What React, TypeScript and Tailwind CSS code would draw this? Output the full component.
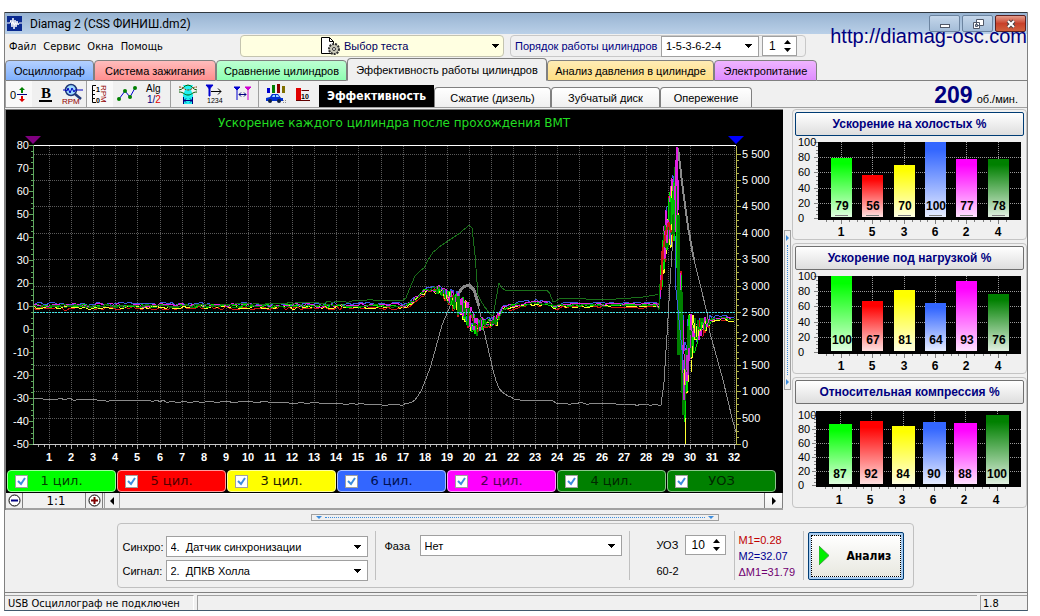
import React, { useState } from 'react';
import clsx from 'clsx';

type Point = [number, number];

const TABS = [
  { label: 'Осциллограф', className: 'w-[89px] bg-linear-to-b from-[#b4d0ff] to-[#7fb0fc]' },
  { label: 'Система зажигания', className: 'w-[122px] bg-linear-to-b from-[#ffbcbc] to-[#ff8e8e]' },
  { label: 'Сравнение цилиндров', className: 'w-[131px] bg-linear-to-b from-[#bcffd2] to-[#8effb2]' },
  { label: 'Эффективность работы цилиндров', className: 'w-[200px]', active: true },
  { label: 'Анализ давления в цилиндре', className: 'w-[167px] bg-linear-to-b from-[#ffecb4] to-[#ffdf82]' },
  { label: 'Электропитание', className: 'w-[103px] bg-linear-to-b from-[#efb4ff] to-[#df8cff]' },
];

const SUB_TABS = [
  { label: 'Сжатие (дизель)', className: 'w-[117px]' },
  { label: 'Зубчатый диск', className: 'w-[109px]' },
  { label: 'Опережение', className: 'w-[92px]' },
];

const LEGEND = [
  { label: '1 цил.', className: 'bg-[#00ff00] border-[#9dff9d] text-[#004000]' },
  { label: '5 цил.', className: 'bg-[#ff0000] border-[#ff9d9d] text-[#500000]' },
  { label: '3 цил.', className: 'bg-[#ffff00] border-[#ffff9d] text-[#202000]' },
  { label: '6 цил.', className: 'bg-[#3366ff] border-[#a8beff] text-[#001050]' },
  { label: '2 цил.', className: 'bg-[#ff00ff] border-[#ff9dff] text-[#500050]' },
  { label: '4 цил.', className: 'bg-[#008000] border-[#8cc68c] text-[#002800]' },
  { label: 'УОЗ', className: 'bg-[#008000] border-[#8cc68c] text-[#002800]' },
];

const CYLINDERS = [
  { id: 1, color: '#00ff00' },
  { id: 5, color: '#ff0000' },
  { id: 3, color: '#ffff00' },
  { id: 6, color: '#3366ff' },
  { id: 2, color: '#ff00ff' },
  { id: 4, color: '#008000' },
];

// average acceleration curve shared by all cylinders
const BASE: Point[] = [
  [34, 306], [408, 306], [414, 300], [424, 292], [432, 289], [440, 291], [448, 296], [456, 303],
  [464, 309], [470, 318], [477, 328], [482, 324], [490, 322], [497, 320], [500, 312], [506, 307],
  [518, 305], [535, 303], [550, 304], [554, 307], [562, 305], [659, 305], [662, 270], [665, 240],
  [668, 226], [672, 215], [675, 205], [677, 225], [679, 290], [682, 340], [684, 385], [686, 385],
  [688, 350], [690, 338], [696, 332], [704, 325], [712, 319], [722, 318], [735, 320],
];

const NOISE: Point[] = [
  [34, 2], [410, 2], [430, 3], [446, 6], [460, 12], [470, 12], [480, 8], [486, 4], [498, 5],
  [504, 2], [658, 1], [662, 22], [668, 26], [673, 42], [677, 50], [680, 60], [684, 46], [687, 34],
  [691, 26], [698, 14], [704, 8], [710, 4], [718, 2], [728, 1], [735, 0],
];

const TRACES = [
  { color: '#3c5ce0', offset: -2, seed: 11 },
  { color: '#d01818', offset: 2, seed: 23 },
  { color: '#ffff30', offset: 1, seed: 37 },
  { color: '#00e000', offset: 0, seed: 51 },
  { color: '#e020e0', offset: -1, seed: 67 },
  { color: '#008000', offset: 0, seed: 83 },
];

const ADVANCE: Point[] = [
  [34, 306], [120, 306], [250, 304], [330, 302], [370, 300], [405, 300], [409, 290], [416, 274],
  [424, 268], [432, 253], [440, 246], [453, 238], [460, 233], [470, 224], [472, 228], [475, 255],
  [478, 295], [483, 305], [490, 314], [495, 317], [497, 281], [499, 283], [503, 290], [549, 290],
  [552, 303], [560, 298], [610, 299], [640, 297], [659, 294],
];

const SPEED: Point[] = [
  [34, 399], [60, 399], [150, 401], [250, 402], [380, 404], [408, 404], [415, 400], [422, 390],
  [432, 362], [442, 325], [450, 306], [457, 295], [463, 287], [469, 284], [474, 290], [480, 312],
  [486, 340], [492, 366], [497, 385], [503, 393], [515, 399], [530, 401], [550, 400], [557, 403],
  [600, 403], [640, 405], [662, 405], [665, 370], [669, 300], [673, 235], [678, 147],
];

const interpolate = (points: Point[], x: number) => {
  const i = points.findIndex(p => p[0] >= x);
  if (i <= 0) return points[i < 0 ? points.length - 1 : 0][1];
  const [x0, y0] = points[i - 1];
  const [x1, y1] = points[i];
  return y0 + ((y1 - y0) * (x - x0)) / (x1 - x0);
};

const createRandom = (seed: number) => {
  let s = seed;
  return () => {
    s = (s * 16807) % 2147483647;
    return s / 2147483647 - 0.5;
  };
};

const buildTrace = (points: Point[], noise: (x: number) => number, offset: number, seed: number) => {
  const random = createRandom(seed * 7919);
  const out: string[] = [];
  const end = points[points.length - 1][0];
  let x = points[0][0];
  while (x <= end) {
    const level = noise(x);
    const y = interpolate(points, x) + offset + random() * 2 * level;
    out.push(`${x},${Math.max(147, Math.min(443, Math.round(y)))}`);
    // calm parts of the signal change slower
    x += level > 4 ? 1 : 3;
  }
  return out.join(' ');
};

const toPoints = (points: Point[]) => points.map(p => p.join(',')).join(' ');

const range = (n: number) => Array.from({ length: n }, (_, i) => i);

const MainChart: React.FC = () => {
  const gridX = range(32).map(i => Math.round(49 + i * 22.1));
  const gridY = range(12).map(i => Math.round(444 - i * 26.4));

  return (
    <svg viewBox="6 110 777 359" className="block w-full bg-black font-['Liberation_Sans']" role="img" aria-label="Ускорение каждого цилиндра">
      <text x="394" y="127" textAnchor="middle" fill="#22dd22" fontSize="12" className="font-['DejaVu_Sans']">
        Ускорение каждого цилиндра после прохождения ВМТ
      </text>
      <g shapeRendering="crispEdges" fill="none">
        <g stroke="#5a5a5a" strokeDasharray="1 1">
          {gridX.map(x => <path key={x} d={`M${x}.5 146V444`} />)}
          {gridY.slice(1).map(y => <path key={y} d={`M34 ${y}.5H736`} />)}
        </g>
        <path d="M34 145.5H736" stroke="#fff" />
        <path d="M33.5 145V445" stroke="#5fa85f" />
        <path d="M33 444.5H737" stroke="#c8c8c8" />
        <path d="M736.5 146V445" stroke="#b8b850" />
        {range(53).map(i => {
          const y = Math.round(145 + i * 5.75) + 0.5;
          return <path key={i} d={`M${i % 4 ? 31 : 29} ${y}H33`} stroke="#5fa85f" />;
        })}
        {range(45).map(i => {
          const y = Math.round(444 - i * 6.6) + 0.5;
          return <path key={i} d={`M737 ${y}H${i % 4 ? 739 : 741}`} stroke="#b8b850" />;
        })}
        {range(127).map(i => {
          const x = Math.round(38 + i * 5.525) + 0.5;
          return <path key={i} d={`M${x} 445V${i % 4 === 2 ? 449 : 447}`} stroke="#a8a8a8" />;
        })}
        <polyline points={buildTrace(SPEED, x => (x < 408 || (x > 515 && x < 660) ? 1 : 0), 0, 5)} stroke="#8a8a8a" />
        <polyline points={toPoints([[456, 297], [463, 287], [469, 285], [474, 290], [479, 306]])} stroke="#8a8a8a" strokeWidth="3" />
        <polyline points={toPoints([[678, 148], [683, 190], [688, 227], [694, 260]])} stroke="#8a8a8a" strokeWidth="2" />
        <polyline points={toPoints([[694, 260], [701, 288], [707, 313], [710, 333], [723, 380], [733, 422], [736, 432]])} stroke="#8a8a8a" />
        {TRACES.map(t => (
          <polyline key={t.seed} points={buildTrace(BASE, x => interpolate(NOISE, x), t.offset, t.seed)} stroke={t.color} />
        ))}
        <polyline points={toPoints([[661, 290], [663, 250], [666, 232], [669, 222], [671, 232]])} stroke="#d01818" strokeWidth="2" />
        <polyline points={toPoints([[671, 225], [672, 198], [673, 215], [674, 182], [675, 230]])} stroke="#00c000" />
        <polyline points={toPoints([[675, 200], [677, 147], [678, 210]])} stroke="#e020e0" strokeWidth="2" />
        <polyline points={toPoints([[678, 215], [678, 355], [681, 290], [682, 370], [684, 415]])} stroke="#008000" strokeWidth="3" />
        <polyline points={toPoints([[682, 345], [684, 400], [687, 355], [688, 375], [691, 335]])} stroke="#b830c8" />
        <polyline points={toPoints([[675, 235], [676, 290], [679, 320], [684, 370]])} stroke="#3c5ce0" />
        <path d="M685.5 418V444M691.5 360V372" stroke="#ffff30" />
        <polyline points={buildTrace(ADVANCE, x => (x < 400 ? 1 : 0), 0, 3)} stroke="#1a701a" />
        <path d="M34 312.5H736" stroke="#40e8e8" strokeDasharray="2 1" />
      </g>
      <path d="M25 136H41L33 144Z" fill="#800080" />
      <path d="M728 136H744L736 144Z" fill="#0000ff" />
      <g fill="#fff" fontSize="11">
        {range(14).map(i => (
          <text key={i} x="29" y={Math.round(149 + i * 23)} textAnchor="end">{80 - i * 10}</text>
        ))}
        {gridY.map((y, i) => (
          <text key={y} x="742" y={y + 4}>{i > 1 ? `${Math.floor(i / 2)} ${i % 2 ? '500' : '000'}` : i * 500}</text>
        ))}
      </g>
      <g fill="#fff" fontSize="11" fontWeight="bold" textAnchor="middle">
        {gridX.map((x, i) => <text key={x} x={x} y="461">{i + 1}</text>)}
      </g>
    </svg>
  );
};

type BarChartProps = {
  title: string;
  values: number[];
  compression?: boolean;
  focused?: boolean;
  baseline?: boolean;
};

const BarChart: React.FC<BarChartProps> = ({ title, values, compression, focused, baseline }) => {
  const left = compression ? 21 : 23;
  const top = compression ? 7 : 6;
  const zero = compression ? 81 : 82;
  const full = compression ? 11 : 6;
  const barWidth = compression ? 23 : 21;
  const firstBar = compression ? 34 : 36;
  const scale = (v: number) => Math.round(zero - ((zero - full) * v) / 100);

  return (
    <section className="rounded border border-[#c4c4c4] px-[2px] pt-[2px]">
      <button
        className={clsx(
          'block h-6 w-full rounded-xs border bg-linear-to-b from-white to-[#dedede] text-[12px] font-bold text-[#000080]',
          focused ? 'border-[#003c74]' : 'border-[#707070]',
        )}
      >
        {title}
      </button>
      <svg viewBox="0 0 229 103" className="block w-full" role="img" aria-label={title}>
        <defs>
          {CYLINDERS.map(c => (
            <linearGradient key={c.id} id={`bar${c.id}`} x1="0" y1="0" x2="0" y2="1">
              <stop offset="0.1" stopColor={c.color} />
              <stop offset="1" stopColor={c.color} stopOpacity="0.12" />
            </linearGradient>
          ))}
        </defs>
        <g shapeRendering="crispEdges">
          <path d={`M${left} ${top}H226V${zero + 2}H${left}Z`} fill="#000" />
          {[20, 40, 60, 80].map(v => (
            <path key={v} d={`M${left} ${scale(v)}.5H226`} stroke="#9a9a9a" strokeDasharray="1 1" />
          ))}
          {range(21).map(i => {
            const y = scale(i * 5) + 0.5;
            return <path key={i} d={`M${left - (i % 4 ? 2 : 4)} ${y}H${left}`} stroke="#808080" />;
          })}
          {values.map((v, i) => {
            const x = Math.round(firstBar + i * 31.3);
            const mid = x + Math.floor(barWidth / 2);
            return (
              <g key={i}>
                <path d={`M${mid}.5 ${top}V${zero}`} stroke="#9a9a9a" strokeDasharray="1 1" />
                <rect x={x} y={scale(v)} width={barWidth} height={zero - 1 - scale(v)} fill="#fff" />
                <rect x={x} y={scale(v)} width={barWidth} height={zero - 1 - scale(v)} fill={`url(#bar${CYLINDERS[i].id})`} />
                {baseline && <path d={`M${x + 4} 79.5H${x + 17}`} stroke="#808080" />}
                <path d={`M${mid}.5 ${zero + 2}V${zero + 6}M${mid - 8}.5 ${zero + 2}v2M${mid + 8}.5 ${zero + 2}v2M${mid - 15}.5 ${zero + 2}v2`} stroke="#808080" />
              </g>
            );
          })}
        </g>
        <g fill="#000" fontSize="11">
          {range(6).map(i => <text key={i} x="3" y={scale(i * 20) + 4}>{i * 20}</text>)}
        </g>
        <g fill="#000" fontSize="12" textAnchor="middle" fontWeight="bold">
          {values.map((v, i) => (
            <text key={i} x={Math.round(firstBar + i * 31.3) + 11} y="74">{v}</text>
          ))}
          {CYLINDERS.map((c, i) => (
            <text key={c.id} x={Math.round(firstBar + i * 31.3) + 10} y="100">{c.id}</text>
          ))}
        </g>
      </svg>
    </section>
  );
};

const Caret: React.FC = () => (
  <svg viewBox="0 0 7 4" className="pointer-events-none w-[7px] shrink-0" shapeRendering="crispEdges"><path d="M0 0H7L3.500 4Z" /></svg>
);

const Select: React.FC<{ id: string; label?: string; options: string[]; className?: string }> = ({ id, label, options, className }) => (
  <div className={clsx('flex h-[21px] items-center border border-[#a0a0a0] bg-white pr-[6px]', className)}>
    <select id={id} aria-label={label} className="h-full min-w-0 flex-1 appearance-none pl-1 text-[11px] outline-none">
      {options.map(o => <option key={o}>{o}</option>)}
    </select>
    <Caret />
  </div>
);

const Spinner: React.FC<{ id: string; label?: string; initial: number; className?: string }> = ({ id, label, initial, className }) => {
  const [value, setValue] = useState(initial);
  return (
    <div className={clsx('flex h-5 items-center border border-[#a0a0a0] bg-white', className)}>
      <input
        id={id}
        aria-label={label}
        value={value}
        onChange={e => setValue(Number(e.target.value) || 0)}
        className="min-w-0 flex-1 pl-[6px] text-[12px] outline-none"
      />
      <div className="flex w-4 flex-col gap-1 pl-1">
        <button aria-label="Больше" onClick={() => setValue(value + 1)}>
          <svg viewBox="0 0 7 4" className="block w-[7px]"><path d="M0 4H7L3.500 0Z" /></svg>
        </button>
        <button aria-label="Меньше" onClick={() => setValue(value - 1)}>
          <svg viewBox="0 0 7 4" className="block w-[7px]"><path d="M0 0H7L3.500 4Z" /></svg>
        </button>
      </div>
    </div>
  );
};

const Icon: React.FC<{ children: React.ReactNode }> = ({ children }) => (
  <svg viewBox="0 0 24 22" className="h-[22px] w-6" fill="none" fontWeight="bold">{children}</svg>
);

const TOOLS = [
  {
    name: 'Ноль',
    pressed: true,
    icon: (
      <Icon>
        <text x="3" y="16" fill="#000" fontSize="11" fontWeight="normal">0</text>
        <path d="M10 11.500H20" stroke="#000080" />
        <path d="M15 4L18 7H16V10H14V7H12Z" fill="#008000" />
        <path d="M15 19L18 16H16V13H14V16H12Z" fill="#e00000" />
      </Icon>
    ),
  },
  {
    name: 'Жирные линии',
    icon: (
      <Icon>
        <text x="12" y="15" fill="#000" fontSize="15" textAnchor="middle" className="font-['Liberation_Serif']">B</text>
        <path d="M5 18H18" stroke="#000" strokeWidth="2" />
      </Icon>
    ),
  },
  {
    name: 'Обороты',
    icon: (
      <Icon>
        <circle cx="10" cy="7" r="5.500" fill="#9cd8ff" stroke="#203878" strokeWidth="1.500" />
        <path d="M2 7H4L6 8L7 5L9 10L11 5L13 9L14 7H22" stroke="#0000c0" />
        <path d="M14 11L20 16" stroke="#203878" strokeWidth="2.500" />
        <text x="1" y="21" fill="#900000" fontSize="8" fontWeight="normal">RPM</text>
      </Icon>
    ),
  },
  {
    name: 'Шкала оборотов',
    pressed: true,
    icon: (
      <Icon>
        <path d="M8 2.500H4.500V19.500H8M4.500 7.500H7M4.500 11.500H7M4.500 15.500H7" stroke="#000" />
        <text x="8" y="9" fill="#000" fontSize="7">1</text>
        <text x="8" y="20" fill="#000" fontSize="7">0</text>
        <text transform="translate(13 2) rotate(90)" fill="#900000" fontSize="8" fontWeight="normal">RPM</text>
      </Icon>
    ),
  },
  {
    name: 'Точки',
    icon: (
      <Icon>
        <path d="M4 16L10 8L15 14L20 5" stroke="#0000d0" />
        <g fill="#008000"><circle cx="4" cy="16" r="2" /><circle cx="10" cy="8" r="2" /><circle cx="15" cy="14" r="2" /><circle cx="20" cy="5" r="2" /></g>
      </Icon>
    ),
  },
  {
    name: 'Алгоритм',
    icon: (
      <Icon>
        <text x="4" y="9" fill="#000" fontSize="10" fontWeight="normal">Alg</text>
        <text x="5" y="20" fill="#000080" fontSize="10" fontWeight="normal">1/<tspan fill="#e00000">2</tspan></text>
      </Icon>
    ),
    separator: true,
  },
  {
    name: 'Интервал',
    icon: (
      <Icon>
        <path d="M7 2H17L15 7L17 12V21H7V12L9 7Z" fill="#20f0f0" />
        <path d="M3 7C7 7 8 2 12 2S17 7 21 7M3 9C8 9 8 12 12 12S16 9 21 9" stroke="#006000" />
        <path d="M3 4C8 4 8 7 12 7S16 4 21 4" stroke="#804000" strokeDasharray="2 1" />
        <path d="M7.500 14V21M16.500 14V21M8 17.500H16M10 15.500L8 17.500L10 19.500M14 15.500L16 17.500L14 19.500" stroke="#000080" />
      </Icon>
    ),
  },
  {
    name: 'Порядок меток',
    icon: (
      <Icon>
        <path d="M3 2H10L6.500 6ZM6 5H7V13H6Z" fill="#0000d0" stroke="#0000d0" />
        <path d="M8 8.500H18M15 5.500L18 8.500L15 11.500" stroke="#000" />
        <text x="4" y="20" fill="#000" fontSize="7" fontWeight="normal">1234</text>
      </Icon>
    ),
  },
  {
    name: 'Между метками',
    icon: (
      <Icon>
        <path d="M4 4H10L7 7ZM7 7V17" fill="#0000d0" stroke="#0000d0" />
        <path d="M15 4H21L18 7ZM18 7V17" fill="#d000d0" stroke="#d000d0" />
        <path d="M9 11.500H16M11 9.500L9 11.500L11 13.500M14 9.500L16 11.500L14 13.500" stroke="#000080" />
      </Icon>
    ),
    separator: true,
  },
  {
    name: 'Диаграмма автомобиля',
    icon: (
      <Icon>
        <path d="M3 5h3v5h-3z" fill="#0000d0" /><path d="M8 2h3v8h-3z" fill="#008000" />
        <path d="M13 1h3v9h-3z" fill="#900000" /><path d="M18 3h3v7h-3z" fill="#807000" />
        <path d="M2 15L6 14L8 11H14L17 15H19V18H2Z" fill="#0030d0" />
        <path d="M9 12H11V14H8ZM12 12H14L15 14H12Z" fill="#9cd8ff" />
        <circle cx="6" cy="18" r="2" fill="#102040" /><circle cx="15" cy="18" r="2" fill="#102040" />
        <path d="M19 17.500H22M19 19.500H23" stroke="#909090" strokeDasharray="1 1" />
      </Icon>
    ),
  },
  {
    name: 'Столбцы',
    icon: (
      <Icon>
        <path d="M5 5h5v12h-5z" fill="#e00000" />
        <path d="M5 17.500H19M10.500 7.500H18" stroke="#600000" />
        <text x="10" y="16" fill="#000" fontSize="7">10</text>
      </Icon>
    ),
  },
];

const WindowButton: React.FC<{ label: string; close?: boolean; children: React.ReactNode }> = ({ label, close, children }) => (
  <button
    aria-label={label}
    className={clsx(
      'flex h-[17px] w-[31px] items-center justify-center rounded-xs border bg-linear-to-b',
      close ? 'border-[#5a2020] from-[#e49c8c] via-[#c8402a] to-[#d0603c]' : 'border-[#6c84a0] from-[#c4d6ea] to-[#a4bdd8]',
    )}
  >
    <svg viewBox="0 0 14 12" className="h-3 w-[14px]" fill="none">{children}</svg>
  </button>
);

const Divider: React.FC = () => <div className="h-[49px] w-px shrink-0 bg-[#c0c0c0]" />;

const Zoom: React.FC<{ label: string; plus?: boolean }> = ({ label, plus }) => (
  <button aria-label={label} className="flex w-[17px] items-center justify-center border-r border-[#808080]">
    <svg viewBox="0 0 13 13" className="w-[13px]" fill="none">
      <circle cx="6.500" cy="6.500" r="5.500" fill="#fff" stroke="#000" />
      <path d={plus ? 'M3 6.500H10M6.500 3V10' : 'M3 6.500H10'} stroke={plus ? '#800000' : '#000080'} strokeWidth="2" />
    </svg>
  </button>
);

const App: React.FC = () => {
  const [visible, setVisible] = useState(LEGEND.map(() => true));

  const toggle = (index: number) => {
    setVisible(visible.map((v, i) => (i === index ? !v : v)));
  };

  return (
    <div className="bg-white pt-3 pr-3 pl-1 font-['Liberation_Sans',sans-serif] text-[11px] leading-4 text-black">
      <div className="relative border-x border-b border-x-[#808080] border-b-[#40586c] bg-[#f0f0f0]">
        <header className="flex h-[22px] items-center gap-2 border-t border-[#303840] bg-linear-to-b from-[#98b4d2] to-[#bad0e8] pr-px pl-[2px]">
          <svg viewBox="0 0 15 15" className="w-[15px]">
            <rect width="15" height="15" fill="#0a2a90" />
            <path d="M0 7H3L4 4L5 11L6 2L7 13L8 4L9 11L10 5L11 9L12 7H15" stroke="#fff" fill="none" />
          </svg>
          <h1 className="flex-1 font-['Roboto'] text-[12px]">Diamag 2 (CSS ФИНИШ.dm2)</h1>
          <div className="flex gap-[2px]">
            <WindowButton label="Свернуть"><rect x="2.500" y="6.500" width="9" height="3" fill="#fff" stroke="#505868" /></WindowButton>
            <WindowButton label="Восстановить">
              <path d="M5.500 1.500H12.500V7.500H5.500ZM2.500 4.500H8.500V10.500H2.500Z" fill="#fff" stroke="#505868" />
              <path d="M4.500 6.500h2v2h-2z" fill="#a4bdd8" stroke="#505868" />
            </WindowButton>
            <WindowButton label="Закрыть" close>
              <path d="M4 3L10 9M10 3L4 9" stroke="#504040" strokeWidth="4" />
              <path d="M4 3L10 9M10 3L4 9" stroke="#fff" strokeWidth="2" />
            </WindowButton>
          </div>
        </header>
        <a href="http://diamag-osc.com" className="absolute top-[12px] right-0 text-[20px] leading-6 text-[#000080]">http://diamag-osc.com</a>

        <div className="flex h-6 items-center">
          <nav className="flex w-[235px] gap-[7px] pt-[2px] pl-1 font-['DejaVu_Sans_Condensed']">
            <button>Файл</button>
            <button>Сервис</button>
            <button>Окна</button>
            <button>Помощь</button>
          </nav>
          <div className="flex h-[22px] min-w-0 flex-1 items-center rounded border border-[#c4c4b0] bg-[#ffffe1] pr-1 pl-[78px]">
            <svg viewBox="0 0 22 20" className="h-5 w-[22px]" fill="none">
              <path d="M2.500 1.500H10.500L14.500 5.500V17.500H2.500Z" fill="#fff" stroke="#000" />
              <path d="M10.500 1.500V5.500H14.500" stroke="#000" />
              <circle cx="15" cy="13" r="5" fill="#c8c8b8" stroke="#303030" strokeWidth="2" strokeDasharray="2 1" />
              <circle cx="15" cy="13" r="1.500" fill="#fff" stroke="#303030" />
            </svg>
            <select aria-label="Тест" className="ml-[3px] h-full min-w-0 flex-1 appearance-none text-[11px] text-[#000060] outline-none">
              <option>Выбор теста</option>
            </select>
            <Caret />
          </div>
          <div className="mr-[221px] ml-[6px] flex h-[22px] w-[296px] shrink-0 items-center rounded border border-[#c8c8c8] pl-1">
            <label htmlFor="order" className="w-[146px] whitespace-nowrap text-[#000080]">Порядок работы цилиндров</label>
            <Select id="order" options={['1-5-3-6-2-4']} className="w-[98px]" />
            <Spinner id="cylinder" label="Цилиндр" initial={1} className="ml-[3px] w-[35px]" />
          </div>
        </div>

        <div className="flex h-[23px] items-end">
          {TABS.map(tab => (
            <button
              key={tab.label}
              className={clsx(
                'shrink-0 rounded-t border border-[#808080] whitespace-nowrap',
                tab.active ? 'h-[23px] border-b-transparent' : 'h-[21px]',
                tab.className,
              )}
            >
              {tab.label}
            </button>
          ))}
          <div className="flex-1 self-stretch border-b border-[#808080]" />
        </div>

        <div className="flex h-[27px] items-end border-b border-[#a0a0a0]">
          {TOOLS.map(tool => (
            <React.Fragment key={tool.name}>
              <button
                title={tool.name}
                className={clsx(
                  'flex h-[26px] w-[27px] shrink-0 items-center justify-center',
                  tool.pressed && 'border-l border-[#a0a0a0] bg-[#f9f9f9]',
                )}
              >
                {tool.icon}
              </button>
              {tool.separator && <div className="mx-[3px] h-[26px] w-px shrink-0 bg-[#a0a0a0]" />}
            </React.Fragment>
          ))}
          <div className="ml-[3px] flex items-end">
            <button className="h-[22px] w-[115px] bg-black font-['DejaVu_Sans_Condensed'] text-[12px] font-bold text-white">Эффективность</button>
            {SUB_TABS.map(tab => (
              <button key={tab.label} className={clsx('h-5 rounded-t border border-b-0 border-[#808080] bg-linear-to-b from-white to-[#f0f0f0]', tab.className)}>
                {tab.label}
              </button>
            ))}
          </div>
          <div className="flex flex-1 items-baseline justify-end gap-1 pr-[9px]">
            <span className="text-[23px] leading-6 font-bold text-[#000080]">209</span>
            <span>об./мин.</span>
          </div>
        </div>

        <main className="flex pt-px">
          <div className="min-w-0 flex-1 border-t border-l border-[#808080]">
            <MainChart />
            <div className="flex bg-black py-px pr-[7px]">
              {LEGEND.map((item, i) => (
                <label
                  key={item.label}
                  className={clsx(
                    "ml-px flex h-[22px] flex-1 items-center rounded border pl-[7px] font-['DejaVu_Sans'] text-[13px]",
                    item.className,
                  )}
                >
                  <span className="grid shrink-0">
                    <input
                      type="checkbox"
                      checked={visible[i]}
                      onChange={() => toggle(i)}
                      className="peer col-start-1 row-start-1 size-[13px] appearance-none border border-[#a0a0a0] bg-white"
                    />
                    <svg viewBox="0 0 13 13" className="pointer-events-none invisible col-start-1 row-start-1 size-[13px] peer-checked:visible">
                      <path d="M3 6L6 9L10 3" stroke="#3c8cdc" strokeWidth="2" fill="none" />
                    </svg>
                  </span>
                  <span className="flex-1 pr-5 text-center">{item.label}</span>
                </label>
              ))}
            </div>
            <div className="flex h-[17px] border-b-2 border-[#a0a0a0]">
              <Zoom label="Уменьшить" />
              <span className="w-[63px] border-r border-[#808080] pl-1 text-center font-['DejaVu_Sans_Condensed'] text-[13px] leading-4">1:1</span>
              <Zoom label="Увеличить" plus />
              <button aria-label="Влево" className="ml-px flex w-4 items-center justify-center border-r border-l border-[#a0a0a0]">
                <svg viewBox="0 0 4 8" className="h-2"><path d="M4 0V8L0 4Z" /></svg>
              </button>
              <div className="flex-1 border-t border-white" />
              <button aria-label="Вправо" className="flex w-[19px] items-center justify-center border-x border-[#808080] bg-linear-to-b from-white to-[#f0f0f0]">
                <svg viewBox="0 0 4 8" className="h-2"><path d="M0 0V8L4 4Z" /></svg>
              </button>
            </div>
          </div>

          <div className="flex w-2 flex-col items-center justify-center">
            <div className="flex h-[160px] w-[7px] flex-col items-center justify-between border border-[#a0a0a0] py-1">
              <svg viewBox="0 0 3 6" className="w-[3px]"><path d="M0 0V6L3 3Z" fill="#3c8cdc" /></svg>
              <div className="h-[130px] border-l border-dotted border-[#3c8cdc]" />
              <svg viewBox="0 0 3 6" className="w-[3px]"><path d="M0 0V6L3 3Z" fill="#3c8cdc" /></svg>
            </div>
          </div>

          <aside className="ml-px flex w-[235px] flex-col gap-[3px]">
            <BarChart title="Ускорение на холостых %" values={[79, 56, 70, 100, 77, 78]} focused baseline />
            <BarChart title="Ускорение под нагрузкой %" values={[100, 67, 81, 64, 93, 76]} />
            <BarChart title="Относительная компрессия %" values={[87, 92, 84, 90, 88, 100]} compression />
          </aside>
        </main>

        <div className="flex flex-col items-center gap-[2px] border-b border-[#808080] pt-1 pr-[2px] pb-1">
          <div className="flex h-[7px] w-[408px] items-center justify-between border border-[#a0a0a0] px-1">
            <svg viewBox="0 0 6 3" className="w-[6px]"><path d="M0 0H6L3 3Z" fill="#3c8cdc" /></svg>
            <div className="w-[380px] border-t border-dotted border-[#3c8cdc]" />
            <svg viewBox="0 0 6 3" className="w-[6px]"><path d="M0 0H6L3 3Z" fill="#3c8cdc" /></svg>
          </div>

          <div className="flex h-[65px] w-[797px] items-center rounded border border-[#c0c0c0] pl-[5px]">
            <div className="grid w-[252px] grid-cols-[43px_202px] items-center gap-y-[3px] pt-[6px]">
              <label htmlFor="sync">Синхро:</label>
              <Select id="sync" options={['4.\u00a0\u00a0Датчик синхронизации']} />
              <label htmlFor="signal">Сигнал:</label>
              <Select id="signal" options={['2.\u00a0\u00a0ДПКВ Холла']} />
            </div>
            <Divider />
            <div className="flex w-[253px] items-center self-start pt-[11px] pl-[9px]">
              <label htmlFor="phase" className="w-[35px]">Фаза</label>
              <Select id="phase" options={['Нет']} className="w-[202px]" />
            </div>
            <Divider />
            <div className="flex w-[104px] flex-col gap-2 self-start pt-[11px] pl-[27px]">
              <div className="flex items-center">
                <label htmlFor="advance" className="w-7">УОЗ</label>
                <Spinner id="advance" initial={10} className="w-[41px]" />
              </div>
              <span>60-2</span>
            </div>
            <Divider />
            <div className="w-[68px] pl-1">
              <p className="text-[#c00000]">M1=0.28</p>
              <p className="text-[#000090]">M2=32.07</p>
              <p className="text-[#700070]">ΔM1=31.79</p>
            </div>
            <Divider />
            <button className="ml-1 h-12 w-24 rounded-xs border border-[#003c74] bg-[#a8ccf0] p-[2px]">
              <span className="flex h-full items-center gap-[18px] border border-dotted border-black bg-linear-to-b from-white to-[#e8e8e0] pl-[7px] font-['DejaVu_Sans_Condensed'] text-[12px] font-bold">
                <svg viewBox="0 0 10 19" className="h-[19px]"><path d="M0 0L10 9.500L0 19Z" fill="#00f000" stroke="#40a040" /></svg>
                Анализ
              </span>
            </button>
          </div>
        </div>

        <footer className="flex h-[17px] gap-[3px] pt-[2px] font-['DejaVu_Sans_Condensed']">
          <span className="w-[189px] border-t border-r border-t-[#a0a0a0] border-r-white pl-[3px]">USB Осциллограф не подключен</span>
          <span className="flex-1 border-t border-l border-[#a0a0a0]" />
          <span className="w-[47px] border-t border-l border-[#a0a0a0] pl-[2px]">1.8</span>
        </footer>
      </div>
    </div>
  );
};

export default App;
